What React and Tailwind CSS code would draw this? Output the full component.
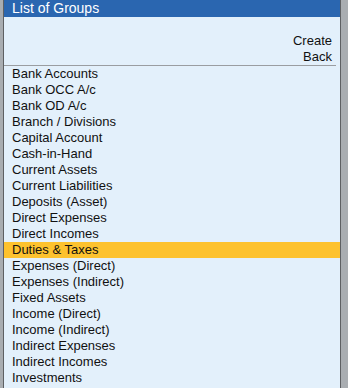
const items = [
  "Bank Accounts",
  "Bank OCC A/c",
  "Bank OD A/c",
  "Branch / Divisions",
  "Capital Account",
  "Cash-in-Hand",
  "Current Assets",
  "Current Liabilities",
  "Deposits (Asset)",
  "Direct Expenses",
  "Direct Incomes",
  "Duties & Taxes",
  "Expenses (Direct)",
  "Expenses (Indirect)",
  "Fixed Assets",
  "Income (Direct)",
  "Income (Indirect)",
  "Indirect Expenses",
  "Indirect Incomes",
  "Investments",
];

export default function App() {
  return (
    <div
      className="w-[348px] h-[388px] bg-[#a9adb1] flex overflow-hidden"
      style={{ fontFamily: '"Liberation Sans", Arial, sans-serif' }}
    >
      <div className="ml-[3px] w-[338px] h-full border-l border-r border-[#5e6063] bg-[#e3f0fb] flex flex-col">
        <div className="h-[17px] bg-[#2a66b0] text-white text-[14px] leading-[16px] pl-[8px]">
          List of Groups
        </div>
        <div className="pt-[16px] pr-[8px] flex flex-col items-end text-[13px] leading-[16px] text-[#111]">
          <div>Create</div>
          <div>Back</div>
        </div>
        <div className="h-px bg-[#9a9da1] mr-[4px]" />
        <div className="flex flex-col text-[13px] text-[#111]">
          {items.map((t) => (
            <div
              key={t}
              className={
                "h-[16px] leading-[15px] pl-[8px] whitespace-nowrap " +
                (t === "Duties & Taxes" ? "bg-[#fdc22e]" : "")
              }
            >
              {t}
            </div>
          ))}
        </div>
      </div>
    </div>
  );
}
